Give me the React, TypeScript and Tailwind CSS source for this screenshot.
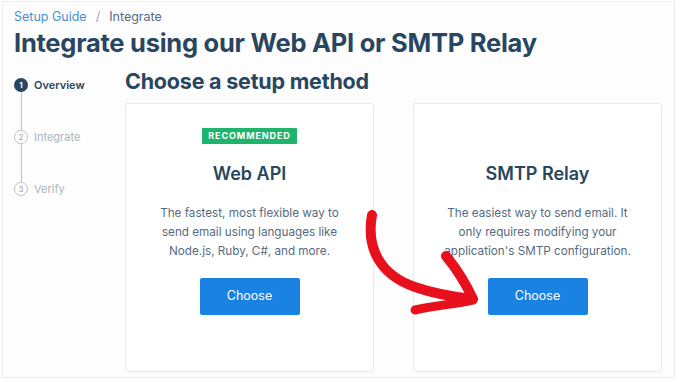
import React from "react";

const steps = [
  { n: 1, label: "Overview", active: true },
  { n: 2, label: "Integrate", active: false },
  { n: 3, label: "Verify", active: false },
];

const StepDot: React.FC<{ n: number; active: boolean }> = ({ n, active }) => (
  <div
    className={
      active
        ? "w-[14px] h-[14px] rounded-full bg-[#294661] text-white text-[8px] font-bold flex items-center justify-center"
        : "w-[14px] h-[14px] rounded-full border border-[#b9c3cc] text-[#9aa7b3] text-[8px] flex items-center justify-center bg-white"
    }
  >
    {n}
  </div>
);

const Card: React.FC<{ title: string; lines: string[]; badge?: boolean }> = ({
  title,
  lines,
  badge,
}) => (
  <div className="w-[249px] h-[269px] bg-white border border-[#e9ecef] rounded-[3px] shadow-[0_1px_2px_rgba(0,0,0,0.04)] flex flex-col items-center pt-[24px]">
    <div
      className={
        badge
          ? "h-4 px-[6px] bg-[#1fb46e] text-white text-[9px] font-bold tracking-[0.1em] flex items-center rounded-[1px]"
          : "h-4"
      }
    >
      {badge ? "RECOMMENDED" : ""}
    </div>
    <h3 className="mt-[18px] h-6 leading-6 text-[18px] font-semibold text-[#294661]">{title}</h3>
    <div className="mt-[18px] text-center text-[11.7px] leading-[19px] text-[#546b81]">
      {lines.map((l) => (
        <p key={l}>{l}</p>
      ))}
    </div>
    <button className="mt-[17px] w-[100px] h-[37px] bg-[#1a82e2] text-white text-[12.5px] rounded-[2px]">
      Choose
    </button>
  </div>
);

export default function App() {
  return (
    <div
      className="w-[680px] h-[382px] bg-white overflow-hidden relative"
      style={{ fontFamily: "Inter, 'Noto Sans', sans-serif" }}
    >
      <div className="ml-[2px] mr-[5px] mt-[1px] h-[377px] border border-[#ececec] bg-[#fdfdfd] px-[11px] pt-[5px]">
        <div className="text-[12.5px] h-5 leading-5 flex gap-[9px]">
          <span className="text-[#4a90d0]">Setup Guide</span>
          <span className="text-[#9aa7b3]">/</span>
          <span className="text-[#546b81]">Integrate</span>
        </div>
        <h1 className="text-[25.5px] leading-[32px] font-bold text-[#294661] tracking-[-0.01em]">
          Integrate using our Web API or SMTP Relay
        </h1>
        <div className="flex mt-[9px]">
          <div className="w-[111px] pt-[10px]">
            {steps.map((s, i) => (
              <div key={s.n}>
                <div className="flex items-center gap-[6px] h-[14px]">
                  <StepDot n={s.n} active={s.active} />
                  <span
                    className={
                      s.active
                        ? "text-[11px] font-semibold text-[#294661]"
                        : "text-[11px] text-[#aab4be]"
                    }
                  >
                    {s.label}
                  </span>
                </div>
                {i < steps.length - 1 && (
                  <div className="ml-[6.5px] w-px h-[38px] bg-[#b9c3cc]" />
                )}
              </div>
            ))}
          </div>
          <div>
            <h2 className="text-[21.5px] leading-[26px] font-bold text-[#294661] tracking-[-0.01em]">
              Choose a setup method
            </h2>
            <div className="mt-[9px] flex gap-[39px]">
              <Card
                badge
                title="Web API"
                lines={[
                  "The fastest, most flexible way to",
                  "send email using languages like",
                  "Node.js, Ruby, C#, and more.",
                ]}
              />
              <Card
                title="SMTP Relay"
                lines={[
                  "The easiest way to send email. It",
                  "only requires modifying your",
                  "application's SMTP configuration.",
                ]}
              />
            </div>
          </div>
        </div>
      </div>
      <svg
        className="absolute left-0 top-0 pointer-events-none"
        width="680"
        height="382"
        viewBox="0 0 680 382"
      >
        <g fill="none" stroke="#e8101c" strokeLinecap="round" strokeLinejoin="round">
          <path d="M372 215 C366 248, 380 275, 415 287 C435 294, 455 297, 472 299" strokeWidth="10" />
          <path d="M446 256 C456 268, 466 284, 473 299" strokeWidth="10" />
          <path d="M473 300 C455 304, 432 306, 415 310" strokeWidth="9" />
        </g>
      </svg>
    </div>
  );
}
